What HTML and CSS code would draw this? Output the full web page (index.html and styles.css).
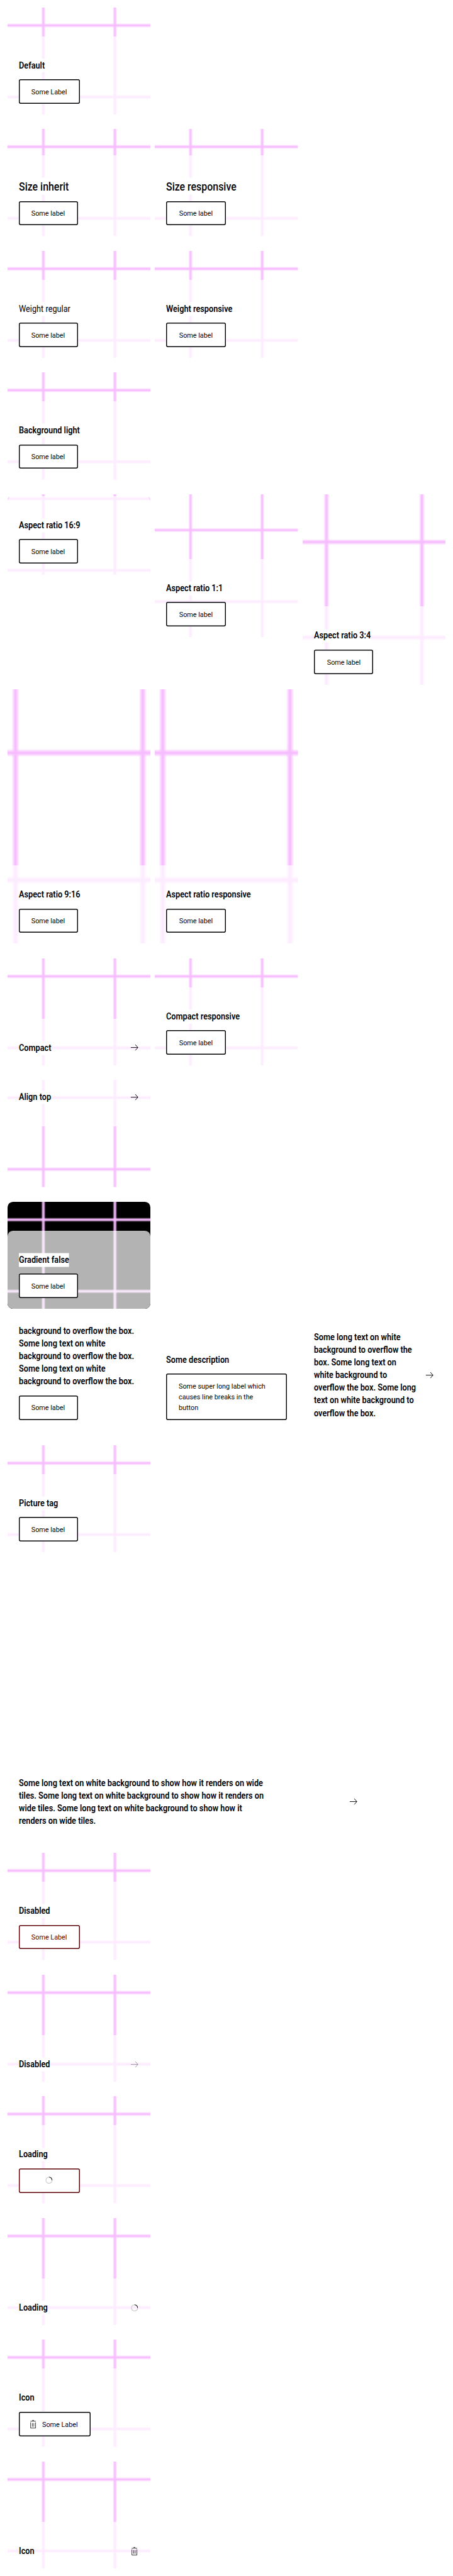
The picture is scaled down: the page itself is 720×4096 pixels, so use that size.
FILE: index.html
```html
<!DOCTYPE html>
<html lang="en">
<head>
<meta charset="utf-8">
<title>Link tile states</title>
<link rel="stylesheet" href="styles.css">
</head>
<body>
<svg class="defs" aria-hidden="true">
  <defs>
    <linearGradient id="gv" x1="0" x2="1" y1="0" y2="0"><stop offset="0" stop-color="#f7bfff" stop-opacity="0"/><stop offset=".36" stop-color="#f7bfff" stop-opacity=".85"/><stop offset=".5" stop-color="#f6b8ff"/><stop offset=".64" stop-color="#f7bfff" stop-opacity=".85"/><stop offset="1" stop-color="#f7bfff" stop-opacity="0"/></linearGradient>
    <linearGradient id="gh" x1="0" x2="0" y1="0" y2="1"><stop offset="0" stop-color="#f7bfff" stop-opacity="0"/><stop offset=".36" stop-color="#f7bfff" stop-opacity=".85"/><stop offset=".5" stop-color="#f6b8ff"/><stop offset=".64" stop-color="#f7bfff" stop-opacity=".85"/><stop offset="1" stop-color="#f7bfff" stop-opacity="0"/></linearGradient>
    <symbol id="lines" viewBox="0 0 316 316" preserveAspectRatio="xMidYMid slice">
      <rect x="74" y="0" width="10" height="316" fill="url(#gv)"/><rect x="232" y="0" width="10" height="316" fill="url(#gv)"/>
      <rect x="0" y="74" width="316" height="10" fill="url(#gh)"/><rect x="0" y="232" width="316" height="10" fill="url(#gh)"/>
    </symbol>
    <symbol id="arrow" viewBox="0 0 24 24"><path d="M4 12h15.500M14 5.600l5.800 6.400L14 18.400" fill="none" stroke="currentColor" stroke-width="1.300"/></symbol>
    <symbol id="trash" viewBox="0 0 24 24"><path d="M10 3.500h4M6 5.500h12M6.500 8v12.500h11V8M10.300 9.500v8M13.700 9.500v8" fill="none" stroke="currentColor" stroke-width="1.100"/></symbol>
    <symbol id="spinner" viewBox="0 0 24 24"><circle cx="12.300" cy="12" r="6.800" fill="none" stroke="#c4c4c6" stroke-width="1.400"/><path d="M12.300 5.200a6.800 6.800 0 0 1 6.800 6.800" fill="none" stroke="#111" stroke-width="1.400"/></symbol>
  </defs>
</svg>
<main class="page">
  <section class="row">
    <article class="tile"><svg class="media"><use href="#lines"/></svg><div class="panel"><p class="title">Default</p><a class="btn lab-u"><span>Some Label</span></a></div></article>
  </section>
  <section class="row">
    <article class="tile"><svg class="media"><use href="#lines"/></svg><div class="panel large"><p class="title">Size inherit</p><a class="btn"><span>Some label</span></a></div></article>
    <article class="tile"><svg class="media"><use href="#lines"/></svg><div class="panel large"><p class="title">Size responsive</p><a class="btn"><span>Some label</span></a></div></article>
  </section>
  <section class="row">
    <article class="tile"><svg class="media"><use href="#lines"/></svg><div class="panel"><p class="title regular">Weight regular</p><a class="btn"><span>Some label</span></a></div></article>
    <article class="tile"><svg class="media"><use href="#lines"/></svg><div class="panel"><p class="title">Weight responsive</p><a class="btn"><span>Some label</span></a></div></article>
  </section>
  <section class="row">
    <article class="tile"><svg class="media"><use href="#lines"/></svg><div class="panel"><p class="title">Background light</p><a class="btn"><span>Some label</span></a></div></article>
  </section>
  <section class="row">
    <article class="tile r169"><svg class="media"><use href="#lines"/></svg><div class="panel"><p class="title">Aspect ratio 16:9</p><a class="btn"><span>Some label</span></a></div></article>
    <article class="tile r11"><svg class="media"><use href="#lines"/></svg><div class="panel"><p class="title">Aspect ratio 1:1</p><a class="btn"><span>Some label</span></a></div></article>
    <article class="tile r34"><svg class="media"><use href="#lines"/></svg><div class="panel"><p class="title">Aspect ratio 3:4</p><a class="btn"><span>Some label</span></a></div></article>
    <article class="tile r916"><svg class="media"><use href="#lines"/></svg><div class="panel"><p class="title">Aspect ratio 9:16</p><a class="btn"><span>Some label</span></a></div></article>
    <article class="tile r916"><svg class="media"><use href="#lines"/></svg><div class="panel"><p class="title">Aspect ratio responsive</p><a class="btn"><span>Some label</span></a></div></article>
  </section>
  <section class="row">
    <article class="tile"><svg class="media"><use href="#lines"/></svg><div class="panel compact"><p class="title">Compact</p><svg class="icon"><use href="#arrow"/></svg></div></article>
    <article class="tile"><svg class="media"><use href="#lines"/></svg><div class="panel"><p class="title">Compact responsive</p><a class="btn"><span>Some label</span></a></div></article>
  </section>
  <section class="row">
    <article class="tile top"><svg class="media"><use href="#lines"/></svg><div class="panel compact"><p class="title">Align top</p><svg class="icon"><use href="#arrow"/></svg></div></article>
  </section>
  <section class="row">
    <article class="tile dark"><svg class="media"><use href="#lines"/></svg><div class="panel"><p class="title">Gradient false</p><a class="btn"><span>Some label</span></a></div></article>
  </section>
  <section class="row">
    <article class="tile"><div class="panel"><p class="title">background to overflow the box.<br>Some long text on white<br>background to overflow the box.<br>Some long text on white<br>background to overflow the box.</p><a class="btn"><span>Some label</span></a></div></article>
    <article class="tile"><div class="panel"><p class="title">Some description</p><a class="btn wide"><span>Some super long label which<br>causes line breaks in the<br>button</span></a></div></article>
    <article class="tile"><div class="panel compact"><p class="title">Some long text on white<br>background to overflow the<br>box. Some long text on<br>white background to<br>overflow the box. Some long<br>text on white background to<br>overflow the box.</p><svg class="icon"><use href="#arrow"/></svg></div></article>
  </section>
  <section class="row">
    <article class="tile"><svg class="media"><use href="#lines"/></svg><div class="panel"><p class="title">Picture tag</p><a class="btn"><span>Some label</span></a></div></article>
  </section>
  <section class="row single">
    <article class="tile"><div class="panel compact"><p class="title">Some long text on white background to show how it renders on wide<br>tiles. Some long text on white background to show how it renders on<br>wide tiles. Some long text on white background to show how it<br>renders on wide tiles.</p><svg class="icon"><use href="#arrow"/></svg></div></article>
  </section>
  <section class="row">
    <article class="tile"><svg class="media"><use href="#lines"/></svg><div class="panel"><p class="title">Disabled</p><a class="btn lab-u off"><span>Some Label</span></a></div></article>
  </section>
  <section class="row">
    <article class="tile"><svg class="media"><use href="#lines"/></svg><div class="panel compact"><p class="title">Disabled</p><svg class="icon faded"><use href="#arrow"/></svg></div></article>
  </section>
  <section class="row">
    <article class="tile"><svg class="media"><use href="#lines"/></svg><div class="panel"><p class="title">Loading</p><a class="btn lab-u off"><svg class="icon"><use href="#spinner"/></svg></a></div></article>
  </section>
  <section class="row">
    <article class="tile"><svg class="media"><use href="#lines"/></svg><div class="panel compact"><p class="title">Loading</p><svg class="icon"><use href="#spinner"/></svg></div></article>
  </section>
  <section class="row">
    <article class="tile"><svg class="media"><use href="#lines"/></svg><div class="panel"><p class="title">Icon</p><a class="btn with-icon"><svg class="icon"><use href="#trash"/></svg><span>Some Label</span></a></div></article>
  </section>
  <section class="row">
    <article class="tile"><svg class="media"><use href="#lines"/></svg><div class="panel compact"><p class="title">Icon</p><svg class="icon"><use href="#trash"/></svg></div></article>
  </section>
</main>
</body>
</html>
```
FILE: styles.css
```css
* { box-sizing: border-box; }
html { background: #fff; }
body { margin: 0; height: 4096px; overflow: hidden; font-family: Roboto, "Liberation Sans", sans-serif; color: #010205; }
.defs { position: absolute; width: 0; height: 0; }
.page { zoom: .72; width: 1000px; padding: 16px; display: flex; flex-direction: column; gap: 31.82px; }
.row { display: grid; grid-template-columns: repeat(3, 316px); gap: 10px; align-items: start; }
.row.single { grid-template-columns: 800px; }
.tile { display: grid; aspect-ratio: 4 / 3; border-radius: 12px; overflow: hidden; min-height: 0; }
.tile > * { grid-area: 1 / 1; min-width: 0; min-height: 0; }
.r169 { aspect-ratio: 16 / 9; }
.r11 { aspect-ratio: 1; }
.r34 { aspect-ratio: 3 / 4; }
.r916 { aspect-ratio: 9 / 16; }
.dark { background: #000; }
.media { width: 100%; height: 100%; contain: size; display: block; }
.panel { align-self: end; display: flex; flex-direction: column; align-items: flex-start; gap: 16px; padding: 49px 25px 24px; border-radius: 12px; background: rgba(255, 255, 255, .7); z-index: 1; }
.panel.compact { flex-direction: row; align-items: center; justify-content: space-between; padding-right: 24px; }
.top .panel.compact { align-self: start; padding: 23px 24px 50px 25px; }

/* Condensed type: text is narrowed horizontally from its left edge */
.title { min-width: 0; margin: 0; padding: 1px 0; background: #fff; font-size: 20px; font-weight: 600; line-height: 28px; white-space: nowrap; transform: translateY(.7px) scaleX(.885); transform-origin: 0 50%; }
.title.regular { font-weight: 400; }
.large { padding-top: 48px; gap: 15px; }
.large .title { font-size: 25px; line-height: 35.3px; font-weight: 500; }

.btn { display: flex; align-items: center; justify-content: center; width: 131px; height: 54px; box-shadow: inset 0 0 0 2px #010205; border-radius: 4px; background: #fff; font-size: 16px; line-height: 24px; white-space: nowrap; }
.btn span { transform: translateY(.7px) scaleX(.94); }
.btn.lab-u { width: 135px; }
.btn.wide { width: 266px; height: 102px; justify-content: flex-start; padding-left: 28px; }
.btn.with-icon { width: 159px; justify-content: flex-start; padding-left: 20px; gap: 8px; }
.btn.wide span, .btn.with-icon span { transform-origin: 0 50%; }
.btn.off { box-shadow: inset 0 0 0 2px #5c0006; color: #5c0006; }
.icon { width: 24px; height: 24px; flex: none; }
.faded { opacity: .4; }
```
